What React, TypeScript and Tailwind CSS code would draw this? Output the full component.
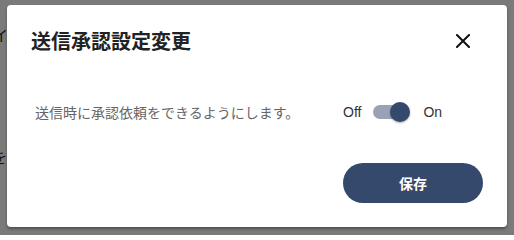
import React from "react";

export default function App() {
  return (
    <div
      className="relative w-[514px] h-[235px] overflow-hidden bg-[#7a7a7a]"
      style={{ fontFamily: '"Noto Sans CJK JP", "Noto Sans", sans-serif' }}
    >
      {/* page content dimmed behind overlay */}
      <span className="absolute left-[-7px] top-[27px] text-[15px] leading-none text-[#111]">イ</span>
      <span className="absolute left-[-8px] top-[149px] text-[15px] leading-none text-[#111]">を</span>

      <div className="absolute left-[7px] top-[5px] w-[500px] h-[222px] bg-white rounded-[4px] shadow-[0_2px_3px_rgba(0,0,0,0.35)] flex flex-col">
        <div className="flex items-center justify-between mt-[22px] h-[28px] pl-6 pr-[32px]">
          <h2 className="text-[20px] leading-none font-bold text-[#222] tracking-normal">送信承認設定変更</h2>
          <button className="w-6 h-6 flex items-center justify-center">
            <svg width="14" height="14" viewBox="0 0 14 14">
              <path d="M1 1 L13 13 M13 1 L1 13" stroke="#111" strokeWidth="2" strokeLinecap="square" />
            </svg>
          </button>
        </div>

        <div className="flex items-center mt-[46px] h-[22px] pl-7">
          <span className="text-[14px] leading-none text-[#666] w-[308px]">送信時に承認依頼をできるようにします。</span>
          <span
            className="text-[14px] leading-none text-[#333]"
            style={{ fontFamily: '"Liberation Sans", Arial, sans-serif' }}
          >
            Off
          </span>
          <div className="relative ml-[12px] w-[34px] h-[14px] rounded-full bg-[#9aa3b6]">
            <div className="absolute left-[17px] top-[-3px] w-[20px] h-[20px] rounded-full bg-[#34496c] shadow-[0_1px_2px_rgba(0,0,0,0.35)]" />
          </div>
          <span
            className="ml-[16px] text-[14px] leading-none text-[#333]"
            style={{ fontFamily: '"Liberation Sans", Arial, sans-serif' }}
          >
            On
          </span>
        </div>

        <div className="mt-auto flex justify-end pr-6 pb-6">
          <button className="w-[140px] h-[40px] rounded-full bg-[#34496c] text-white text-[14px] font-bold leading-none">
            保存
          </button>
        </div>
      </div>
    </div>
  );
}
